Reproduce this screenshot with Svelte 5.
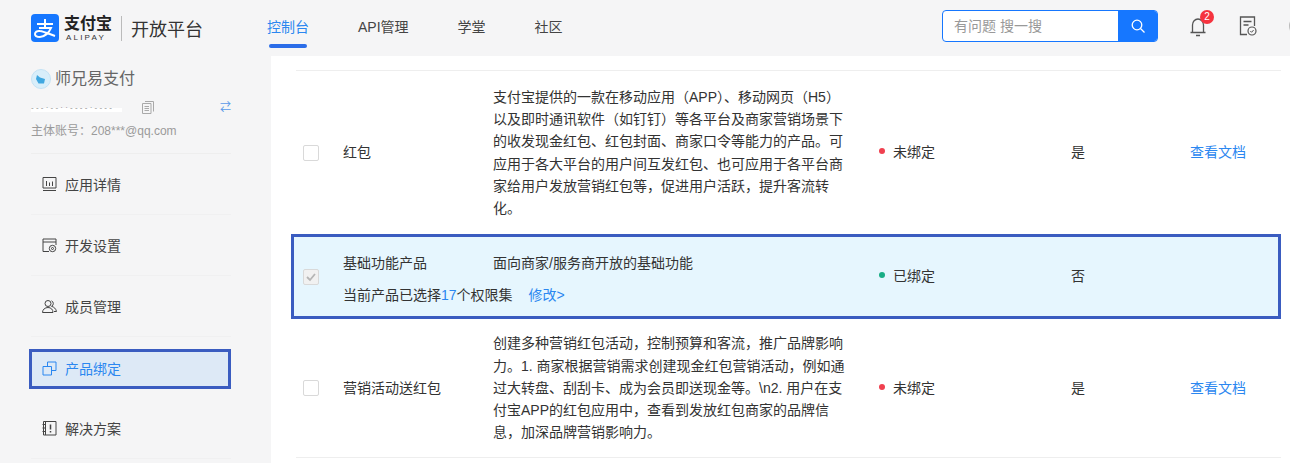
<script>
  const navItems = [
    { label: '应用详情', icon: 'detail' },
    { label: '开发设置', icon: 'gear' },
    { label: '成员管理', icon: 'member' },
    { label: '产品绑定', icon: 'bind', active: true },
    { label: '解决方案', icon: 'plan' }
  ];
  const tabs = ['控制台', 'API管理', '学堂', '社区'];
</script>

<div class="page">
  <header class="topbar">
    <div class="brand">
      <svg class="logo" viewBox="0 0 28 28" width="28" height="28">
        <rect width="28" height="28" rx="4" fill="#1677ff" />
        <path d="M6 10h16M14 5v9M8 14h12c-2 5-7 9-11 9-3 0-5-1-5-3s2-3.500 5-3c4 .5 9 3 15 5" fill="none" stroke="#fff" stroke-width="2" />
      </svg>
      <div class="wordmark">
        <span class="wm-cn">支付宝</span>
        <span class="wm-en">ALIPAY</span>
      </div>
      <span class="brand-sep"></span>
      <span class="brand-title">开放平台</span>
    </div>
    <nav class="tabs">
      {#each tabs as tab, i}
        <span class="tab" class:current={i === 0}>{tab}</span>
      {/each}
    </nav>
    <div class="tools">
      <div class="search">
        <span class="search-input">有问题 搜一搜</span>
        <span class="search-btn">
          <svg viewBox="0 0 16 16" width="16" height="16"><circle cx="7" cy="7" r="4.800" fill="none" stroke="#fff" stroke-width="1.300" /><path d="M10.500 10.500 14.500 14.500" stroke="#fff" stroke-width="1.300" /></svg>
        </span>
      </div>
      <div class="bell">
        <svg viewBox="0 0 18 22" width="18" height="22"><path d="M1.500 17.500h15M3.500 17.500V10a5.500 6 0 0 1 11 0v7.500M7 20.500h4" fill="none" stroke="#555" stroke-width="1.300" /></svg>
        <span class="badge">2</span>
      </div>
      <svg class="todo" viewBox="0 0 18 20" width="18" height="20">
        <path d="M8 18.500H1.500V1h14v9M4.500 5.500h8M4.500 9h5" fill="none" stroke="#555" stroke-width="1.300" />
        <circle cx="13" cy="15" r="4" fill="#f5f5f6" stroke="#555" stroke-width="1.200" />
        <path d="M11.300 15l1.300 1.300 2-2.300" fill="none" stroke="#555" stroke-width="1" />
      </svg>
      <span class="avatar"></span>
    </div>
  </header>

  <div class="body">
    <aside class="side">
      <div class="app-name">
        <svg class="app-logo" viewBox="0 0 20 20" width="20" height="20">
          <circle cx="10" cy="10" r="9.500" fill="#d8eefa" stroke="#c4e2f4" />
          <path d="M6 6l3 2.500 5 1.500-1 4.500H7.500L5 10z" fill="#3fa7e0" />
        </svg>
        <span>师兄易支付</span>
      </div>
      <div class="app-id">
        <span class="app-id-text">- - - · - - · · - - - - · - - - -</span>
        <svg class="copy" viewBox="0 0 12 13" width="12" height="13"><path d="M3 .5h8.500v10M.5 2.500h8.500v10H.500zM2.500 5.500h4.500M2.500 7.500h4.500M2.500 9.500h4.500" fill="none" stroke="#a9a9a9" /></svg>
        <span class="swap">⇄</span>
      </div>
      <div class="owner">主体账号：208***@qq.com</div>
      <ul class="menu">
        {#each navItems as item}
          <li class="menu-item" class:active={item.active}>
            <svg viewBox="0 0 15 15" width="15" height="15" fill="none" stroke="currentColor">
              {#if item.icon === 'detail'}
                <path d="M1 .5h13v10.500H1zM1 13.500h13M4.500 4v5M7.500 5.500V9M10.500 4.500V9" />
              {:else if item.icon === 'gear'}
                <path d="M7 13.500H1V1h13v6M1 4h13" />
                <circle cx="10.500" cy="10.500" r="3.200" />
                <circle cx="10.500" cy="10.500" r="1" />
              {:else if item.icon === 'member'}
                <circle cx="6" cy="4.500" r="3" />
                <path d="M.5 13.500c0-3 2.500-5 5.500-5s5 2 5 5zM9.500 1.800a3 3 0 0 1 0 5.500c2.500.6 4.500 2.500 5 5.200h-2.500" />
              {:else if item.icon === 'bind'}
                <path d="M1 5.500h8.500v8.500H1zM5.500 5.500V1H14v8.500h-4.500" />
              {:else}
                <path d="M1.500 .5H14v13.500H1.500zM3.500 .5v13.500M.5 3.500h3M.5 7h3M.5 10.500h3" />
                <path d="M8.500 3.500v5M8.500 10v1.500" stroke-width="1.500" />
              {/if}
            </svg>
            <span>{item.label}</span>
          </li>
        {/each}
      </ul>
    </aside>

    <main class="content">
      <div class="row row-tall">
        <span class="cell-check"><span class="box"></span></span>
        <span class="cell-name">红包</span>
        <p class="cell-desc">支付宝提供的一款在移动应用（APP）、移动网页（H5）以及即时通讯软件（如钉钉）等各平台及商家营销场景下的收发现金红包、红包封面、商家口令等能力的产品。可应用于各大平台的用户间互发红包、也可应用于各平台商家给用户发放营销红包等，促进用户活跃，提升客流转化。</p>
        <span class="cell-status"><i class="dot off"></i>未绑定</span>
        <span class="cell-flag">是</span>
        <a class="cell-doc" href="#doc">查看文档</a>
      </div>

      <div class="row row-picked">
        <span class="cell-check"><span class="box checked">
          <svg viewBox="0 0 14 14" width="14" height="14"><path d="M3 7l3 3 5-6" fill="none" stroke="#b5b5b5" stroke-width="1.800" /></svg>
        </span></span>
        <div class="picked-main">
          <div class="picked-top">
            <span class="cell-name">基础功能产品</span>
            <span class="cell-desc">面向商家/服务商开放的基础功能</span>
          </div>
          <div class="picked-sub">当前产品已选择<em>17</em>个权限集<a href="#edit">修改&gt;</a></div>
        </div>
        <span class="cell-status"><i class="dot on"></i>已绑定</span>
        <span class="cell-flag">否</span>
        <span class="cell-doc"></span>
      </div>

      <div class="row row-last">
        <span class="cell-check"><span class="box"></span></span>
        <span class="cell-name">营销活动送红包</span>
        <p class="cell-desc">创建多种营销红包活动，控制预算和客流，推广品牌影响力。1. 商家根据营销需求创建现金红包营销活动，例如通过大转盘、刮刮卡、成为会员即送现金等。\n2. 用户在支付宝APP的红包应用中，查看到发放红包商家的品牌信息，加深品牌营销影响力。</p>
        <span class="cell-status"><i class="dot off"></i>未绑定</span>
        <span class="cell-flag">是</span>
        <a class="cell-doc" href="#doc">查看文档</a>
      </div>
    </main>
  </div>
</div>

<style>
  :global(body) { margin: 0; background: #f5f5f6; overflow: hidden; }

  .page {
    width: 1290px; height: 463px; overflow: hidden;
    font-family: "Liberation Sans", "Noto Sans CJK SC", sans-serif;
    font-size: 14px; color: #333;
  }

  .topbar { display: flex; align-items: center; height: 56px; padding-left: 31px; }
  .brand { display: flex; align-items: center; width: 236px; flex-shrink: 0; }
  .wordmark { display: flex; flex-direction: column; margin-left: 5px; width: 49px; }
  .wm-cn { font-size: 16px; font-weight: 700; line-height: 18px; color: #222; white-space: nowrap; }
  .wm-en { font-size: 8px; line-height: 9px; letter-spacing: 2.200px; color: #333; padding-left: 2px; }
  .brand-sep { width: 1px; height: 25px; background: #bbb; margin: 0 9px 0 8px; }
  .brand-title { font-size: 18px; color: #333; white-space: nowrap; }

  .tabs { display: flex; gap: 49px; width: 675px; flex-shrink: 0; }
  .tab { position: relative; line-height: 54px; height: 56px; color: #444; white-space: nowrap; }
  .tab.current { color: #2b87f0; }
  .tab.current::after {
    content: ''; position: absolute; left: 2px; right: 2px; bottom: 8px;
    height: 4px; border-radius: 2px; background: #2b6de8;
  }

  .tools { display: flex; align-items: center; flex-shrink: 0; margin-bottom: 4px; }
  .search {
    display: flex; width: 216px; height: 32px; box-sizing: border-box; flex-shrink: 0;
    border: 1px solid #1677ff; border-radius: 4px; background: #fff; overflow: hidden;
  }
  .search-input { flex: 1; padding-left: 11px; line-height: 30px; color: #999; }
  .search-btn { width: 39px; background: #1677ff; display: flex; align-items: center; justify-content: center; }

  .bell { position: relative; width: 18px; height: 22px; margin-left: 31px; flex-shrink: 0; }
  .badge {
    position: absolute; left: 11px; top: -5px; width: 14px; height: 14px; border-radius: 50%;
    background: #f5333f; color: #fff; font-size: 10px; line-height: 14px; text-align: center;
  }
  .todo { margin-left: 32px; flex-shrink: 0; }
  .avatar { width: 20px; height: 20px; border-radius: 50%; background: #bbb; margin-left: 32px; flex-shrink: 0; }

  .body { display: flex; height: 407px; }
  .side { width: 271px; flex-shrink: 0; padding: 13px 40px 0 31px; box-sizing: border-box; }
  .app-name { display: flex; align-items: center; gap: 4px; font-size: 16px; color: #666; line-height: 20px; }
  .app-logo { flex-shrink: 0; }
  .app-id { display: flex; align-items: center; margin-top: 11px; height: 14px; }
  .app-id-text {
    width: 91px; font-size: 8px; color: #888; white-space: nowrap; overflow: hidden;
    background: linear-gradient(#f5f5f6 50%, #fff 50%);
  }
  .copy { margin-left: 20px; }
  .swap { margin-left: 66px; font-size: 11px; color: #5b9ae8; line-height: 14px; }
  .owner { margin-top: 9px; font-size: 12px; line-height: 16px; color: #9a9a9a; white-space: nowrap; }

  .menu { list-style: none; margin: 14px 0 0; padding: 0; border-top: 1px solid #eeeeee; }
  .menu-item {
    display: flex; align-items: center; gap: 8px; height: 60px; padding-left: 11px;
    border-bottom: 1px solid #f0f0f1; color: #444;
  }
  .menu-item svg { flex-shrink: 0; }
  .menu-item.active {
    height: 32px; margin: 12px 0 9px -2px; padding: 0 0 2px 10px;
    border: 3px solid #3a5cc0; background: #dde9f6; color: #2b87f0;
  }

  .content { flex: 1; background: #fff; padding: 14px 9px 0 20px; min-width: 0; }
  .row {
    display: flex; align-items: center; border-top: 1px solid #eeeeee;
    box-sizing: border-box; padding-left: 12px;
  }
  .row-tall { height: 164px; margin-left: 5px; padding-left: 7px; }
  .row-picked {
    height: 85px; border: 3px solid #3a5cc0; background: #e6f6fe; padding-left: 9px;
  }
  .row-last { height: 139px; margin-left: 5px; padding-left: 7px; border-top: 0; border-bottom: 1px solid #eeeeee; }

  .cell-check { width: 40px; flex-shrink: 0; display: flex; }
  .box {
    width: 16px; height: 16px; box-sizing: border-box; border: 1px solid #d9d9d9;
    border-radius: 2px; background: #fff; display: flex; align-items: center; justify-content: center;
  }
  .box.checked { background: #f1f1f1; }
  .cell-name { width: 150px; flex-shrink: 0; color: #333; margin-bottom: 3px; }
  .cell-desc { width: 352px; flex-shrink: 0; margin: 0 34px 0 0; line-height: 22.300px; color: #333; }
  .cell-status { width: 192px; flex-shrink: 0; display: flex; align-items: center; gap: 8px; color: #333; margin-bottom: 3px; }
  .dot { width: 6px; height: 6px; border-radius: 50%; }
  .dot.off { background: #f0404f; }
  .dot.on { background: #18ad85; }
  .cell-flag { width: 119px; flex-shrink: 0; color: #333; margin-bottom: 3px; }
  .cell-doc { color: #2b87f0; text-decoration: none; white-space: nowrap; margin-bottom: 3px; }

  .picked-main { width: 536px; flex-shrink: 0; margin-top: 4px; }
  .picked-top { display: flex; line-height: 20px; }
  .picked-top .cell-name { margin-bottom: 0; }
  .picked-top .cell-desc { margin: 0; line-height: 20px; }
  .picked-sub { margin-top: 12px; line-height: 20px; color: #333; }
  .picked-sub em { font-style: normal; color: #2b87f0; }
  .picked-sub a { color: #2b87f0; text-decoration: none; margin-left: 16px; }
</style>
